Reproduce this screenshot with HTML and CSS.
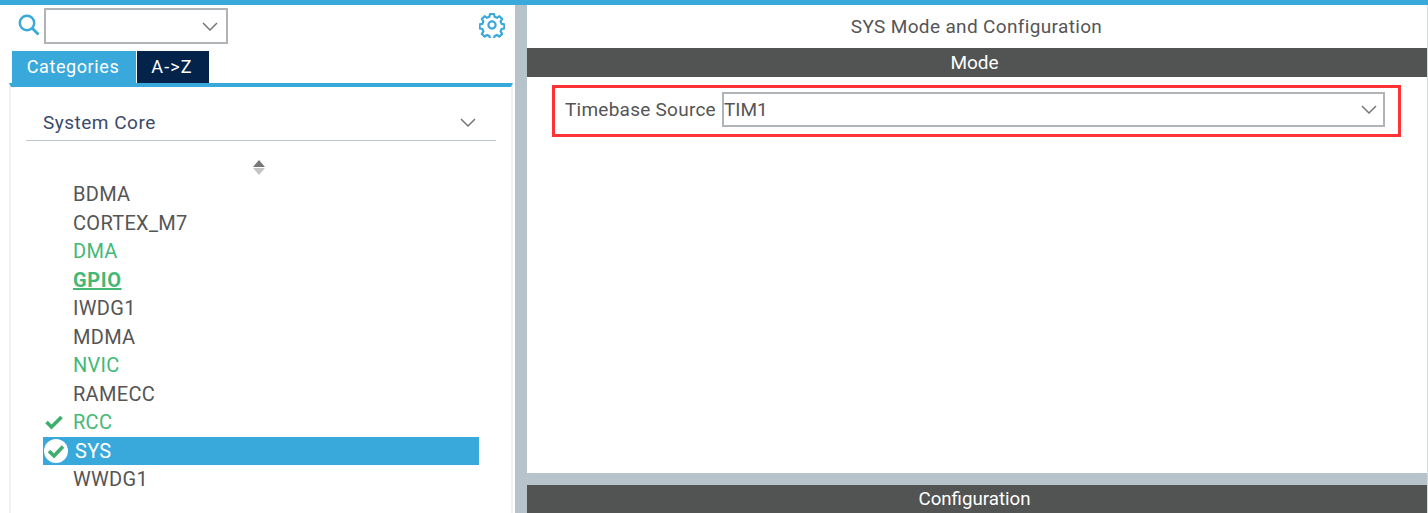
FILE: index.html
```html
<!DOCTYPE html>
<html lang="en">
<head>
    <meta charset="UTF-8">
    <title>SYS Mode and Configuration</title>
    <link rel="stylesheet" href="styles.css">
</head>
<body>

<div class="top-bar"></div>

<div class="main">
    <div class="left-panel">
        <div class="search-row">
            <svg class="search-icon" width="22" height="22" viewBox="0 0 22 22">
                <circle cx="9" cy="9" r="7.2" fill="none" stroke="#39a9dc" stroke-width="2.4"/>
                <path d="M14 14 L20.500 20.500" stroke="#39a9dc" stroke-width="2.8" fill="none"/>
            </svg>
            <div class="search-box">
                <svg class="chevron" width="16" height="9" viewBox="0 0 16 9">
                    <path d="M1 1 L8 8 L15 1" fill="none" stroke="#777" stroke-width="1.5"/>
                </svg>
            </div>
            <svg class="gear-icon" width="26" height="26" viewBox="0 0 26 26">
                <path d="M11 2h4l.6 2.800 2.400 1 2.400-1.600 2.800 2.800-1.600 2.400 1 2.400 2.800.6v4l-2.800.6-1 2.400 1.600 2.400-2.800 2.800-2.400-1.600-2.400 1-.6 2.800h-4l-.6-2.800-2.400-1-2.400 1.600-2.800-2.800 1.600-2.400-1-2.400-2.800-.6v-4l2.800-.6 1-2.400-1.600-2.400 2.800-2.800 2.400 1.600 2.400-1z" fill="none" stroke="#39a9dc" stroke-width="2.200" stroke-linejoin="round"/>
                <circle cx="13" cy="13" r="3.600" fill="none" stroke="#39a9dc" stroke-width="2.200"/>
            </svg>
        </div>

        <div class="tabs">
            <div class="tab tab-active">Categories</div>
            <div class="tab tab-dark">A-&gt;Z</div>
        </div>

        <div class="tree">
            <div class="category">
                <span>System Core</span>
                <svg width="16" height="9" viewBox="0 0 16 9">
                    <path d="M1 1 L8 8 L15 1" fill="none" stroke="#777" stroke-width="1.5"/>
                </svg>
            </div>
            <div class="sort-arrows">
                <span class="arrow-up"></span>
                <span class="arrow-down"></span>
            </div>
            <ul class="items">
                <li class="item">BDMA</li>
                <li class="item">CORTEX_M7</li>
                <li class="item green">DMA</li>
                <li class="item green gpio">GPIO</li>
                <li class="item">IWDG1</li>
                <li class="item">MDMA</li>
                <li class="item green">NVIC</li>
                <li class="item">RAMECC</li>
                <li class="item green">
                    <svg class="check" width="18" height="15" viewBox="0 0 18 15">
                        <path d="M1.500 7 L6.500 12 L16.500 2" fill="none" stroke="#3fae6c" stroke-width="3.600"/>
                    </svg>
                    RCC
                </li>
                <li class="item selected">
                    <svg class="check-round" width="24" height="24" viewBox="0 0 24 24">
                        <circle cx="12" cy="12" r="12" fill="#fff"/>
                        <path d="M5 12 L10 17 L19 7.500" fill="none" stroke="#3fae6c" stroke-width="3.600"/>
                    </svg>
                    SYS
                </li>
                <li class="item">WWDG1</li>
            </ul>
        </div>
    </div>

    <div class="splitter"></div>

    <div class="right-panel">
        <div class="panel-title">SYS Mode and Configuration</div>
        <div class="section-header">Mode</div>
        <div class="mode-body">
            <div class="highlight">
                <label class="field-label">Timebase Source</label>
                <div class="select-box">
                    <span>TIM1</span>
                    <svg width="16" height="9" viewBox="0 0 16 9">
                        <path d="M1 1 L8 8 L15 1" fill="none" stroke="#777" stroke-width="1.5"/>
                    </svg>
                </div>
            </div>
        </div>
        <div class="config-gap"></div>
        <div class="section-header config-header">Configuration</div>
    </div>
</div>

</body>
</html>
```

FILE: styles.css
```css
html, body {
    height: 100%;
}

body {
    margin: 0;
    overflow: hidden;
    background-color: white;
    font-family: Roboto, "Liberation Sans", Arial, sans-serif;
    color: #555;
    display: flex;
    flex-direction: column;
}

.top-bar {
    height: 5px;
    background-color: #39a9dc;
    flex-shrink: 0;
}

.main {
    flex: 1;
    display: flex;
    min-height: 0;
}

.left-panel {
    width: 515px;
    flex-shrink: 0;
    box-sizing: border-box;
    padding-left: 8px;
    background-color: white;
}

.search-row {
    display: flex;
    align-items: center;
    height: 39px;
    padding-top: 3px;
    box-sizing: border-box;
    margin-bottom: 7px;
}

.search-icon {
    margin: 0 4px 2px 10px;
}

.search-box {
    width: 184px;
    height: 36px;
    box-sizing: border-box;
    border: 2px solid #b0b4b7;
    display: flex;
    align-items: center;
    justify-content: flex-end;
    padding-right: 8px;
}

.gear-icon {
    margin: 0 10px 3px auto;
}

.tabs {
    display: flex;
    height: 32px;
    margin-left: 4px;
    gap: 1px;
}

.tab {
    font-size: 18px;
    letter-spacing: 0.6px;
    color: white;
    line-height: 32px;
    text-align: center;
    box-sizing: border-box;
}

.tab-active {
    width: 124px;
    padding-right: 2px;
    background-color: #39a9dc;
}

.tab-dark {
    width: 72px;
    letter-spacing: 1.1px;
    padding-right: 2px;
    background-color: #03234b;
}

.tree {
    margin-left: 1px;
    margin-right: 2px;
    border-top: 4px solid #39a9dc;
    border-left: 2px solid #f0f1f3;
    border-right: 2px solid #f0f1f3;
    height: 430px;
    box-sizing: border-box;
}

.category {
    margin: 17px 15px 0 15px;
    height: 37px;
    border-bottom: 1px solid #bcc8ce;
    display: flex;
    align-items: center;
    justify-content: space-between;
    font-size: 19px;
    letter-spacing: 0.5px;
    color: #3a4a6b;
    padding: 0 18px 0 17px;
    box-sizing: border-box;
}

.category svg {
    margin-right: 2px;
}

.sort-arrows {
    display: flex;
    flex-direction: column;
    align-items: center;
    gap: 1px;
    width: 496px;
    margin-top: 19px;
    height: 17px;
}

.arrow-up, .arrow-down {
    width: 0;
    height: 0;
    border-left: 6px solid transparent;
    border-right: 6px solid transparent;
}

.arrow-up {
    border-bottom: 7px solid #777;
}

.arrow-down {
    border-top: 7px solid #c4c4c4;
}

.items {
    list-style: none;
    margin: 3px 0 0;
    padding: 0;
}

.item {
    position: relative;
    height: 28.5px;
    line-height: 28.5px;
    margin-left: 32px;
    width: 436px;
    padding-left: 30px;
    box-sizing: border-box;
    font-size: 20px;
    letter-spacing: 0.3px;
    color: #555;
}

.green {
    color: #45b877;
}

.gpio {
    font-weight: bold;
    letter-spacing: 0.6px;
    text-decoration: underline;
}

.check {
    position: absolute;
    left: 2px;
    top: 7px;
}

.selected {
    background-color: #39a9dc;
    color: white;
    padding-left: 32px;
}

.check-round {
    position: absolute;
    left: 1px;
    top: 2px;
}

.splitter {
    width: 12px;
    flex-shrink: 0;
    background-color: #b6c3ca;
}

.right-panel {
    flex: 1;
    display: flex;
    flex-direction: column;
    min-width: 0;
    border-right: 1px solid #d5dade;
}

.panel-title {
    height: 43px;
    line-height: 43px;
    padding-right: 1px;
    text-align: center;
    font-size: 19px;
    letter-spacing: 0.35px;
    color: #555;
    flex-shrink: 0;
}

.section-header {
    height: 29px;
    line-height: 29px;
    padding-right: 5px;
    text-align: center;
    background-color: #525453;
    color: white;
    font-size: 19px;
    flex-shrink: 0;
}

.mode-body {
    height: 396px;
    flex-shrink: 0;
    padding: 8px 0 0 25px;
    box-sizing: border-box;
}

.highlight {
    width: 849px;
    height: 52px;
    box-sizing: border-box;
    border: 3px solid #f33;
    display: flex;
    align-items: center;
    padding: 0 13px 3px 10px;
    gap: 6px;
}

.field-label {
    font-size: 19px;
    letter-spacing: 0.25px;
    white-space: nowrap;
    color: #555;
}

.select-box {
    flex: 1;
    height: 35px;
    box-sizing: border-box;
    border: 2px solid #b0b4b7;
    display: flex;
    align-items: center;
    justify-content: space-between;
    padding: 0 6px 0 0;
    font-size: 19px;
    color: #555;
}

.config-gap {
    height: 12px;
    background-color: #b6c3ca;
    flex-shrink: 0;
}

.config-header {
    flex: 1;
    font-size: 18.7px;
    line-height: 29px;
}
```
